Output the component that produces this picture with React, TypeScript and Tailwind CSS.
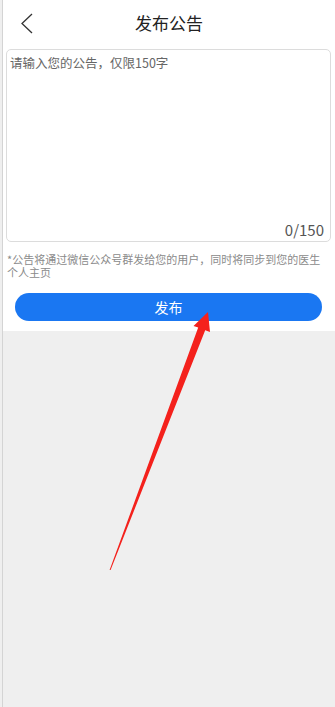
export default function App() {
  return (
    <div
      className="relative min-h-[707px] bg-[#efefef]"
      style={{ fontFamily: '"Noto Sans CJK SC", "Noto Sans", sans-serif' }}
    >
      <div className="ml-[2px] min-h-[707px] border-l border-[#d4d4d4]">
        <div className="bg-white pb-[10px]">
          {/* header */}
          <div className="relative flex h-[46px] items-center justify-center">
            <button className="absolute left-[17px] top-[12px] text-[#333]">
              <svg width="14" height="23" viewBox="0 0 14 23" fill="none">
                <polyline points="12,2 2,11.5 12,21" stroke="currentColor" strokeWidth="1.3" />
              </svg>
            </button>
            <h1 className="text-[17px] font-normal text-[#222]">发布公告</h1>
          </div>

          {/* announcement input */}
          <div className="mx-[3px] mr-[4px] mt-[3px] flex h-[193px] flex-col justify-between rounded-[5px] border border-[#dcdcdc] px-[3px] pb-[2px] pt-[5px]">
            <p className="text-[12.5px] leading-[16px] text-[#666]">请输入您的公告，仅限150字</p>
            <p className="self-end pr-[3px] text-[15px] leading-[18px] text-[#555]">0/150</p>
          </div>

          <p className="mt-[11px] pl-[4px] pr-[8px] text-[11px] leading-[13px] text-[#8a8a8a]">
            *公告将通过微信公众号群发给您的用户，同时将同步到您的医生个人主页
          </p>

          <div className="mt-[14px] px-[12px]">
            <button className="flex h-[28px] w-[307px] items-center justify-center rounded-full bg-[#1a77f2] text-[14px] text-white">
              发布
            </button>
          </div>
        </div>
      </div>

      {/* red annotation arrow */}
      <svg className="pointer-events-none absolute left-0 top-0" width="335" height="707" viewBox="0 0 335 707">
        <polygon
          points="208,312 210,332 205.2,330.2 110.6,570 109.6,570 198.2,327.6 193.5,326"
          fill="#f4211c"
        />
      </svg>
    </div>
  );
}
